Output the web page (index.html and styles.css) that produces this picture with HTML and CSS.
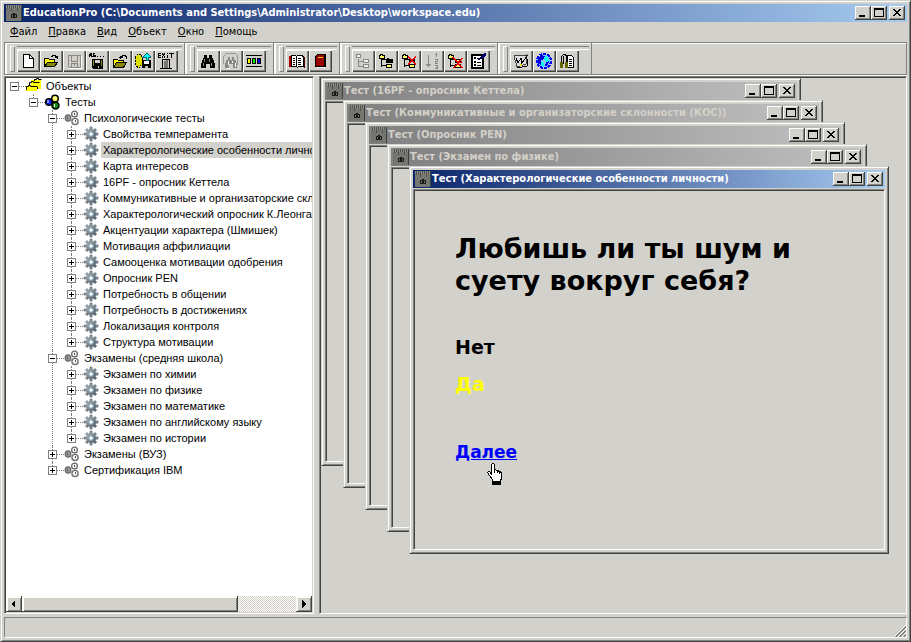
FILE: index.html
```html
<!DOCTYPE html>
<html lang="ru">

<head>
    <meta charset="UTF-8">
    <meta name="viewport" content="width=device-width, initial-scale=1.0">
    <title>EducationPro</title>
    <link rel="stylesheet" href="styles.css">
</head>

<body>

    <!-- Shared icons -->
    <svg class="sprite" aria-hidden="true">
        <linearGradient id="metal" x1="0" y1="0" x2="1" y2="1">
            <stop offset="0" stop-color="#a9b4bb" />
            <stop offset="1" stop-color="#4c565d" />
        </linearGradient>
        <symbol id="i-app" viewBox="0 0 16 16">
            <rect width="16" height="16" fill="#74776f" />
            <path d="M0 0h16v3H0z" fill="#8b8e86" />
            <path d="M1.5 0v4M3.5 0v3M5.5 0v6M7.5 0v3M9.5 0v3M11.5 0v6M13.5 0v3" stroke="#50524c" />
            <path d="M15.5 0v16" stroke="#3c3e3a" />
            <path d="M5.500 9.500h2v3h-2zM8.500 9.500h2v3h-2z" fill="none" stroke="#111" />
            <path d="M7 8h2v1H7zM7 11h2v1H7z" fill="#111" />
        </symbol>
        <symbol id="i-gear" viewBox="0 0 16 16">
            <path d="M8 1v14M1 8h14M3 3l10 10M13 3L3 13" stroke="url(#metal)" stroke-width="3" />
            <path d="M7 .5h2v15H7zM.5 7h15v2H.5z" fill="#7b878f" />
            <circle cx="8" cy="8" r="5" fill="url(#metal)" />
            <circle cx="8" cy="8" r="3" fill="#7fa0b5" />
            <circle cx="8" cy="8" r="1.7" fill="#fff" />
        </symbol>
        <symbol id="i-group" viewBox="0 0 16 16">
            <g fill="#f4f4f4" stroke="#6a6a6a" stroke-width="1.3">
                <ellipse cx="4" cy="8" rx="2.8" ry="3.2" fill="#9a9a9a" />
                <circle cx="10.500" cy="4" r="2.900" />
                <circle cx="11" cy="11.500" r="3.100" />
            </g>
            <path d="M3 7h1v2H3zM10 3h1v2h-1zM11 10h1v2h-1z" fill="#555" />
        </symbol>
        <symbol id="i-min" viewBox="0 0 12 10"><path d="M2 7h6v2H2z" /></symbol>
        <symbol id="i-max" viewBox="0 0 12 10"><path d="M1 0h10v9H1zM2 2v6h8V2z" fill-rule="evenodd" /></symbol>
        <symbol id="i-close" viewBox="0 0 12 10">
            <path d="M2 1h2v1h1v1h2V2h1V1h2v1H9v1H8v1H7v1h1v1h1v1h1v1H8V7H7V6H5v1H4v1H2V7h1V6h1V5h1V4H4V3H3V2H2z" />
        </symbol>
        <symbol id="i-tree" viewBox="0 0 16 16">
            <path d="M3.500 6v8M3 6.500h5M3 12.500h5" stroke="#000" fill="none" />
            <path d="M1.500 2.500h1v-1h2v1h2v3h-5z" fill="#ff6" stroke="#000" />
        </symbol>
    </svg>

    <div class="frame main-window">
        <header class="title-bar">
            <svg class="icon"><use href="#i-app" /></svg>
            <h1 class="title">EducationPro (C:\Documents and Settings\Administrator\Desktop\workspace.edu)</h1>
            <button class="cap" aria-label="Свернуть"><svg><use href="#i-min" /></svg></button>
            <button class="cap" aria-label="Развернуть"><svg><use href="#i-max" /></svg></button>
            <button class="cap close" aria-label="Закрыть"><svg><use href="#i-close" /></svg></button>
        </header>

        <nav class="menu">
            <button><u>Ф</u>айл</button>
            <button><u>П</u>равка</button>
            <button><u>В</u>ид</button>
            <button><u>О</u>бъект</button>
            <button><u>О</u>кно</button>
            <button><u>П</u>омощь</button>
        </nav>

        <div class="toolbar">
            <div class="band first">
                <!-- new -->
                <button aria-label="Новый"><svg viewBox="0 0 16 16"><path d="M3.500 1.500h6l4 4v9h-10z" fill="#fff" stroke="#000" /><path d="M9.500 2v3.500h4" fill="none" stroke="#000" /></svg></button>
                <!-- open -->
                <button aria-label="Открыть"><svg viewBox="0 0 16 16"><path d="M1.500 13.500v-8h4l1 1h5v3" fill="#ff0" stroke="#000" /><path d="M1.500 13.500l3-4h10l-3 4z" fill="#880" stroke="#000" /><path d="M8 3.500h1v-1h3v1h2v2M12 4.500h3" fill="none" stroke="#000" /></svg></button>
                <!-- save -->
                <button aria-label="Сохранить"><svg viewBox="0 0 16 16"><path d="M2.500 2.500h12v12h-11l-1-1z" fill="#d4d0c8" stroke="#888" /><path d="M5.500 3v5h6V3M5.500 14v-4h6v4M8.500 11v2" fill="none" stroke="#888" /><path d="M3 15.500h12.500V3" fill="none" stroke="#fff" /></svg></button>
                <!-- save as -->
                <button aria-label="Сохранить как"><svg viewBox="0 0 16 16"><path d="M3 6h11v10H4l-1-1z" /><path d="M4 7h1v6H4zM12 7h1v6h-1z" fill="#880" /><path d="M6 7h5v3H6zM9 13h1v2H9z" fill="#d4d0c8" /><path d="M0 4V1h1V0h1v4M0 2.500h2M6 .500H4v1.500h2v1.500H3M8 3.500h1M11 3.500h1M14 3.500h1" stroke="#000" fill="none" /></svg></button>
                <!-- close project -->
                <button aria-label="Закрыть"><svg viewBox="0 0 16 16"><path d="M1.500 14.500v-8h4l1 1h5v3" fill="#ff0" stroke="#000" /><path d="M1.500 14.500l3-5h10l-3 5z" fill="#880" stroke="#000" /><path d="M7 4.500h4M8.500 3v3M9 3.500h1v-1h3v1h1v2" fill="none" stroke="#000" /></svg></button>
                <!-- export -->
                <button aria-label="Экспорт"><svg viewBox="0 0 16 16"><path d="M0 5l3-4h3l1 3v9l-2-1-1 3-3-2z" fill="#dd0" stroke="#000" stroke-dasharray="2 1" /><path d="M7 7h9v8H7z" /><path d="M9 8h5v3H9z" fill="#fff" /><path d="M10 13h3v2h-3z" fill="#bbb" /><path d="M12 0l4 4h-3v3h-2V4H8z" fill="#0ff" stroke="#066" /></svg></button>
                <!-- exit -->
                <button aria-label="Выход"><svg viewBox="0 0 16 16"><path d="M3 .500H.500v4H3M1 2.500h2M4 0l3 5M7 0L4 5M9.500 2v3M9.500 0v1M11 .500h5M13.500 0v5" fill="none" stroke="#000" /><path d="M4.500 15V6.500h7V15" fill="#d4d0c8" stroke="#000" /><path d="M6 8l4-1v9l-4-1z" fill="#777" /><path d="M2 15.500h12" stroke="#000" /></svg></button>
            </div>
            <div class="band">
                <!-- find -->
                <button aria-label="Найти"><svg viewBox="0 0 16 16"><path d="M4 2h3v3h2V2h3v3h1v2h1v3h1v5h-5v-4H6v4H1v-5h1V7h1V5h1z" /><path d="M4.500 6v3M3.500 10v3M9.500 6v3M11.500 10v3" stroke="#888" /></svg></button>
                <!-- find again -->
                <button aria-label="Найти далее"><svg viewBox="0 0 16 16"><path d="M2.500 .500h10l2 2v9h-2M.500 11V4l2-3" fill="none" stroke="#999" /><path d="M5 4h2v3h2V4h2v3h2v3h1v5h-4v-4H6v4H2v-5h1V7h2z" fill="#888" /><path d="M5.500 8v4M9.500 8v2M12.500 10v4M4 15.500h3" stroke="#fff" /></svg></button>
                <!-- colours -->
                <button aria-label="Цвета"><svg viewBox="0 0 16 16"><path d="M0 2.500h16M0 13.500h16" stroke="#000" /><path d="M1.500 5.500h3v5h-3z" fill="#ff0" stroke="#000" /><path d="M6.500 5.500h3v5h-3z" fill="#0e0" stroke="#000" /><path d="M11.500 5.500h3v5h-3z" fill="#00f" stroke="#000" /></svg></button>
            </div>
            <div class="band">
                <!-- open book -->
                <button aria-label="Справочник"><svg viewBox="0 0 16 16"><path d="M1 3h14v11H1z" fill="#fff" /><path d="M1 3v11" stroke="#a00" stroke-width="2" /><path d="M2.500 2.500h4l1 1 1-1h4l2 1v10h-5l-1 1-1-1h-5zM7.500 3v11" fill="none" stroke="#000" /><path d="M4 5.500h2M4 7.500h2M4 9.500h2M4 11.500h2M9 5.500h3M9 7.500h3M9 9.500h3M9 11.500h3" stroke="#000" /><path d="M15.500 4v11" stroke="#500" /></svg></button>
                <!-- closed book -->
                <button aria-label="Книга"><svg viewBox="0 0 16 16"><path d="M3 3l2-2h9v13H3z" /><path d="M4 4h8v9H4z" fill="#900" /><path d="M5 2h7v2H5z" fill="#900" /><path d="M6 4h5v1H6z" fill="#fc0" /><path d="M5 14.500h8" stroke="#fff" stroke-dasharray="2 1" /></svg></button>
            </div>
            <div class="band">
                <!-- tree, disabled -->
                <button aria-label="Объекты"><svg viewBox="0 0 16 16"><path d="M3.500 6v7.500H8M3.500 8.500H8" fill="none" stroke="#888" /><path d="M1.500 1.500h4v3h-4zM8.500 6.500h5v3h-5zM8.500 11.500h5v3h-5z" fill="#eee" stroke="#888" /></svg></button>
                <!-- add node -->
                <button aria-label="Добавить"><svg viewBox="0 0 16 16"><use href="#i-tree" /><path d="M8 6h1V5h2v1h4v4H8z" /><path d="M8.500 11.500h5v3h-5z" fill="#ff6" stroke="#000" /></svg></button>
                <!-- delete node -->
                <button aria-label="Удалить"><svg viewBox="0 0 16 16"><use href="#i-tree" /><path d="M8.500 11.500h5v3h-5z" fill="#ff6" stroke="#000" /><path d="M8 6h6v3H8z" /><path d="M7 4l8 7M15 4l-8 7" stroke="#e00" stroke-width="1.500" /></svg></button>
                <!-- sort, disabled -->
                <button aria-label="Порядок"><svg viewBox="0 0 16 16"><path d="M4.500 2v12M2 11.500h5M3 12.500h3M12.500 0v4M11 1.500h1M11 6.500h2.500v2H11.500v2H14M11 12.500h2.500v3H11M12 14h1" fill="none" stroke="#888" /></svg></button>
                <!-- clear all -->
                <button aria-label="Очистить"><svg viewBox="0 0 16 16"><use href="#i-tree" /><path d="M8.500 6.500h5v3h-5zM8.500 11.500h5v3h-5z" fill="#ff6" stroke="#000" /><path d="M7 5l8 10M15 5l-8 10M6 4l4 5M15 9l-5 1" stroke="#e00" stroke-width="1.500" /></svg></button>
                <!-- checklist -->
                <button aria-label="Свойства"><svg viewBox="0 0 16 16"><path d="M2 2h11v13H2z" fill="#fff" stroke="#000" stroke-width="2" /><path d="M4 5h2M4 9h2M4 12h2" stroke="#000" stroke-width="2" /><path d="M7 5.500h2M7 9.500h4M7 12.500h4" stroke="#000" /><path d="M8 7l4-4 3-3v3l-3 2z" fill="#006" stroke="#006" /></svg></button>
            </div>
            <div class="band last">
                <!-- test sheet -->
                <button aria-label="Тест"><svg viewBox="0 0 16 16"><path d="M1 3l3 11 9-3V2z" fill="#ddd" stroke="#444" /><path d="M3 5l2 5 3-5 1 5M15 2l-7 9M14 6v7l-10 2" stroke="#000" fill="none" /><path d="M7 11h2v2H7z" fill="#dd0" /></svg></button>
                <!-- globe -->
                <button aria-label="Интернет"><svg viewBox="0 0 16 16"><circle cx="8" cy="8" r="7" fill="#8cf" stroke="#00f" stroke-width="2" stroke-dasharray="3 1" /><path d="M2 5l3-3 4 1-1 3-3 1 1 3-2 2-2-3zM10 9l3-1-1 4-3 1z" fill="#00d" /><path d="M9 3l3 1v3h2v1l-4 1-2-2zM5 9l3 1v3l-2 1z" fill="#0ff" /></svg></button>
                <!-- book search -->
                <button aria-label="Просмотр"><svg viewBox="0 0 16 16"><path d="M8.500 2.500h4l2 2v10h-6z" fill="#fff" stroke="#000" /><path d="M10 6.500h3M10 8.500h3M10 10.500h3M10 12.500h3" stroke="#000" /><path d="M2.500 11V3.500l2-2h2l1 2V11M4.500 3v8" fill="none" stroke="#000" /><path d="M1 9h3v6H1zM6 9h3v6H6z" fill="#660" /></svg></button>
            </div>
        </div>

        <main class="panes">
            <section class="sunken side">
                <div class="tree-view">
                    <ul class="tree">
                        <li>
                            <div class="row"><button class="toggle open" aria-label="Свернуть"></button><i></i>
                                <svg class="icon" viewBox="0 0 16 16"><path d="M5 2h3V1h3v1h4v9h-4v2H0V8h2V7h3z" fill="#ff0" /><path d="M.500 12V8.500h2v-1h2v1h7M3.500 7V4.500h2v-1h2v1h6M8.500 3V1.500h2v-1h2v1h3M11.500 9v2" fill="none" stroke="#000" /></svg>
                                <span>Объекты</span></div>
                            <ul>
                                <li>
                                    <div class="row"><button class="toggle open" aria-label="Свернуть"></button><i></i>
                                        <svg class="icon" viewBox="0 0 16 16"><g stroke="#000" stroke-width="1.500"><circle cx="4" cy="8" r="3.300" fill="#12f" /><circle cx="10" cy="4.500" r="3.300" fill="#ff6" /><circle cx="10.500" cy="11.500" r="3.500" fill="#181" /></g><path d="M3 6v3M9 4h2M9.500 10v3" stroke="#fff" /></svg>
                                        <span>Тесты</span></div>
                                    <ul>
                                        <li>
                                            <div class="row"><button class="toggle open" aria-label="Свернуть"></button><i></i><svg class="icon"><use href="#i-group" /></svg><span>Психологические тесты</span></div>
                                            <ul>
                                                <li><div class="row"><button class="toggle" aria-label="Развернуть"></button><i></i><svg class="icon"><use href="#i-gear" /></svg><span>Свойства темперамента</span></div></li>
                                                <li><div class="row"><button class="toggle" aria-label="Развернуть"></button><i></i><svg class="icon"><use href="#i-gear" /></svg><span class="selected">Характерологические особенности личности</span></div></li>
                                                <li><div class="row"><button class="toggle" aria-label="Развернуть"></button><i></i><svg class="icon"><use href="#i-gear" /></svg><span>Карта интересов</span></div></li>
                                                <li><div class="row"><button class="toggle" aria-label="Развернуть"></button><i></i><svg class="icon"><use href="#i-gear" /></svg><span>16PF - опросник Кеттела</span></div></li>
                                                <li><div class="row"><button class="toggle" aria-label="Развернуть"></button><i></i><svg class="icon"><use href="#i-gear" /></svg><span>Коммуникативные и организаторские склонности</span></div></li>
                                                <li><div class="row"><button class="toggle" aria-label="Развернуть"></button><i></i><svg class="icon"><use href="#i-gear" /></svg><span>Характерологический опросник К.Леонгарда</span></div></li>
                                                <li><div class="row"><button class="toggle" aria-label="Развернуть"></button><i></i><svg class="icon"><use href="#i-gear" /></svg><span>Акцентуации характера (Шмишек)</span></div></li>
                                                <li><div class="row"><button class="toggle" aria-label="Развернуть"></button><i></i><svg class="icon"><use href="#i-gear" /></svg><span>Мотивация аффилиации</span></div></li>
                                                <li><div class="row"><button class="toggle" aria-label="Развернуть"></button><i></i><svg class="icon"><use href="#i-gear" /></svg><span>Самооценка мотивации одобрения</span></div></li>
                                                <li><div class="row"><button class="toggle" aria-label="Развернуть"></button><i></i><svg class="icon"><use href="#i-gear" /></svg><span>Опросник PEN</span></div></li>
                                                <li><div class="row"><button class="toggle" aria-label="Развернуть"></button><i></i><svg class="icon"><use href="#i-gear" /></svg><span>Потребность в общении</span></div></li>
                                                <li><div class="row"><button class="toggle" aria-label="Развернуть"></button><i></i><svg class="icon"><use href="#i-gear" /></svg><span>Потребность в достижениях</span></div></li>
                                                <li><div class="row"><button class="toggle" aria-label="Развернуть"></button><i></i><svg class="icon"><use href="#i-gear" /></svg><span>Локализация контроля</span></div></li>
                                                <li><div class="row"><button class="toggle" aria-label="Развернуть"></button><i></i><svg class="icon"><use href="#i-gear" /></svg><span>Структура мотивации</span></div></li>
                                            </ul>
                                        </li>
                                        <li>
                                            <div class="row"><button class="toggle open" aria-label="Свернуть"></button><i></i><svg class="icon"><use href="#i-group" /></svg><span>Экзамены (средняя школа)</span></div>
                                            <ul>
                                                <li><div class="row"><button class="toggle" aria-label="Развернуть"></button><i></i><svg class="icon"><use href="#i-gear" /></svg><span>Экзамен по химии</span></div></li>
                                                <li><div class="row"><button class="toggle" aria-label="Развернуть"></button><i></i><svg class="icon"><use href="#i-gear" /></svg><span>Экзамен по физике</span></div></li>
                                                <li><div class="row"><button class="toggle" aria-label="Развернуть"></button><i></i><svg class="icon"><use href="#i-gear" /></svg><span>Экзамен по математике</span></div></li>
                                                <li><div class="row"><button class="toggle" aria-label="Развернуть"></button><i></i><svg class="icon"><use href="#i-gear" /></svg><span>Экзамен по английскому языку</span></div></li>
                                                <li><div class="row"><button class="toggle" aria-label="Развернуть"></button><i></i><svg class="icon"><use href="#i-gear" /></svg><span>Экзамен по истории</span></div></li>
                                            </ul>
                                        </li>
                                        <li><div class="row"><button class="toggle" aria-label="Развернуть"></button><i></i><svg class="icon"><use href="#i-group" /></svg><span>Экзамены (ВУЗ)</span></div></li>
                                        <li><div class="row"><button class="toggle" aria-label="Развернуть"></button><i></i><svg class="icon"><use href="#i-group" /></svg><span>Сертификация IBM</span></div></li>
                                    </ul>
                                </li>
                            </ul>
                        </li>
                    </ul>
                </div>
                <div class="scrollbar">
                    <button aria-label="Влево"><svg viewBox="0 0 12 12"><path d="M3 6l4-4v8z" /></svg></button>
                    <div class="track"><div class="thumb"></div></div>
                    <button aria-label="Вправо"><svg viewBox="0 0 12 12"><path d="M8 6L4 2v8z" /></svg></button>
                </div>
            </section>

            <section class="sunken desktop">
                <div class="frame child w1">
                    <div class="title-bar inactive">
                        <svg class="icon"><use href="#i-app" /></svg>
                        <h2 class="title">Тест (16PF - опросник Кеттела)</h2>
                        <button class="cap" aria-label="Свернуть"><svg><use href="#i-min" /></svg></button>
                        <button class="cap" aria-label="Развернуть"><svg><use href="#i-max" /></svg></button>
                        <button class="cap close" aria-label="Закрыть"><svg><use href="#i-close" /></svg></button>
                    </div>
                    <div class="sunken body"></div>
                </div>
                <div class="frame child w2">
                    <div class="title-bar inactive">
                        <svg class="icon"><use href="#i-app" /></svg>
                        <h2 class="title">Тест (Коммуникативные и организаторские склонности (КОС))</h2>
                        <button class="cap" aria-label="Свернуть"><svg><use href="#i-min" /></svg></button>
                        <button class="cap" aria-label="Развернуть"><svg><use href="#i-max" /></svg></button>
                        <button class="cap close" aria-label="Закрыть"><svg><use href="#i-close" /></svg></button>
                    </div>
                    <div class="sunken body"></div>
                </div>
                <div class="frame child w3">
                    <div class="title-bar inactive">
                        <svg class="icon"><use href="#i-app" /></svg>
                        <h2 class="title">Тест (Опросник PEN)</h2>
                        <button class="cap" aria-label="Свернуть"><svg><use href="#i-min" /></svg></button>
                        <button class="cap" aria-label="Развернуть"><svg><use href="#i-max" /></svg></button>
                        <button class="cap close" aria-label="Закрыть"><svg><use href="#i-close" /></svg></button>
                    </div>
                    <div class="sunken body"></div>
                </div>
                <div class="frame child w4">
                    <div class="title-bar inactive">
                        <svg class="icon"><use href="#i-app" /></svg>
                        <h2 class="title">Тест (Экзамен по физике)</h2>
                        <button class="cap" aria-label="Свернуть"><svg><use href="#i-min" /></svg></button>
                        <button class="cap" aria-label="Развернуть"><svg><use href="#i-max" /></svg></button>
                        <button class="cap close" aria-label="Закрыть"><svg><use href="#i-close" /></svg></button>
                    </div>
                    <div class="sunken body"></div>
                </div>
                <div class="frame child w5">
                    <div class="title-bar">
                        <svg class="icon"><use href="#i-app" /></svg>
                        <h2 class="title">Тест (Характерологические особенности личности)</h2>
                        <button class="cap" aria-label="Свернуть"><svg><use href="#i-min" /></svg></button>
                        <button class="cap" aria-label="Развернуть"><svg><use href="#i-max" /></svg></button>
                        <button class="cap close" aria-label="Закрыть"><svg><use href="#i-close" /></svg></button>
                    </div>
                    <div class="sunken body quiz">
                        <h3 class="question">Любишь ли ты шум и суету вокруг себя?</h3>
                        <button class="answer">Нет</button>
                        <button class="answer hot">Да</button>
                        <div class="next">
                            <a href="#">Далее</a>
                            <svg class="pointer" viewBox="0 0 17 24"><path d="M5.500 12.500V2.500l1-1h1l1 1v5l3 1 2 1 2 1v6l-1 2v1h-8v-2l-3-4-2-3 1-1h1l1 1z" fill="#fff" stroke="#000" /><path d="M8.500 7v4M11.500 8v3M13.500 9v3" stroke="#000" /><path d="M6 19h9v4H6z" /></svg>
                        </div>
                    </div>
                </div>
            </section>
        </main>

        <footer class="status">
            <svg class="grip" viewBox="0 0 12 12"><path d="M0 12L12 0M4 12l8-8M8 12l4-4" stroke="#fff" /><path d="M1.500 12L12 1.500M5.500 12L12 5.500M9.500 12L12 9.500" stroke="#808080" stroke-width="2" /></svg>
        </footer>
    </div>

</body>

</html>
```
FILE: styles.css
```css
:root {
    --face: #d2d1cc;
    --light: #fcfcf8;
    --shadow: #828280;
    --dark: #424440;
}

* {
    margin: 0;
    padding: 0;
    box-sizing: border-box;
}

body {
    height: 100vh;
    font-family: "DejaVu Sans Condensed", Tahoma, sans-serif;
    font-size: 11px;
    color: #000;
    background-color: var(--face);
    cursor: default;
}

button {
    font: inherit;
    color: inherit;
    background-color: var(--face);
    border: none;
}

svg {
    display: block;
    flex: none;
    shape-rendering: crispEdges;
}

ul {
    list-style: none;
}

.sprite {
    position: absolute;
    width: 0;
    height: 0;
}

.icon {
    width: 16px;
    height: 16px;
    shape-rendering: auto;
}

/* raised window border */
.frame {
    display: flex;
    flex-direction: column;
    background-color: var(--face);
    border: 1px solid;
    border-color: var(--face) var(--dark) var(--dark) var(--face);
    box-shadow: inset 1px 1px var(--light), inset -1px -1px var(--shadow);
    padding: 3px;
}

.sunken {
    border: 1px solid;
    border-color: var(--shadow) var(--light) var(--light) var(--shadow);
    box-shadow: inset 1px 1px var(--dark), inset -1px -1px var(--face);
    padding: 1px;
}

.main-window {
    height: 100%;
}

/* title bars */
.title-bar {
    display: flex;
    align-items: center;
    height: 18px;
    flex: none;
    padding: 0 2px;
    color: #fff;
    background: linear-gradient(to right, #0a246a, #a6caf0);
}

.inactive {
    color: #d4d0c8;
    background: linear-gradient(to right, #808080, #c0c0c0);
}

.title {
    flex: 1;
    min-width: 0;
    padding-left: 1px;
    overflow: hidden;
    white-space: nowrap;
    font-size: 11px;
    line-height: 18px;
}

.cap {
    width: 16px;
    height: 14px;
    padding: 1px 2px 3px 1px;
    box-shadow: inset -1px -1px var(--dark), inset 1px 1px var(--light), inset -2px -2px var(--shadow);
}

.cap svg {
    width: 12px;
    height: 10px;
    margin: 1px;
}

.close {
    margin-left: 2px;
}

/* menu */
.menu {
    display: flex;
    height: 20px;
    flex: none;
    padding-left: 1px;
}

.menu button {
    padding: 0 6px 0 5px;
    line-height: 20px;
}

/* toolbar */
.toolbar {
    display: flex;
    height: 33px;
    flex: none;
    margin-bottom: 1px;
    border: 1px solid var(--shadow);
    box-shadow: inset 1px 1px var(--light), 0 1px var(--light);
}

.band {
    position: relative;
    display: flex;
    align-items: flex-end;
    padding: 0 7px 2px 12px;
    border-right: 1px solid var(--shadow);
    box-shadow: inset 2px 0 var(--light);
}

.band.first {
    padding-right: 6px;
}

.band.last {
    padding-right: 12px;
}

/* gripper and upper ridge */
.band::before {
    content: "";
    position: absolute;
    left: 5px;
    top: 3px;
    bottom: 2px;
    width: 3px;
    border: 1px solid;
    border-color: var(--light) var(--shadow) var(--shadow) var(--light);
}

.band::after {
    content: "";
    position: absolute;
    left: 12px;
    right: 2px;
    top: 3px;
    height: 2px;
    border-top: 1px solid var(--shadow);
    border-bottom: 1px solid var(--light);
}

.band button {
    width: 23px;
    height: 22px;
    padding: 3px;
    box-shadow: inset 1px 1px var(--light), inset -1px -1px var(--dark), inset -2px -2px var(--shadow);
}

.band svg {
    width: 16px;
    height: 16px;
}

/* panes */
.panes {
    display: flex;
    flex: 1;
    min-height: 0;
    gap: 5px;
}

.side {
    display: flex;
    flex-direction: column;
    width: 310px;
    flex: none;
    padding: 1px;
}

.tree-view {
    flex: 1;
    min-height: 0;
    overflow: hidden;
    background-color: #fff;
    font-family: "Liberation Sans", Arial, sans-serif;
}

.tree {
    padding-left: 4px;
}

.tree ul {
    padding-left: 19px;
}

.tree li {
    position: relative;
}

/* dotted line joining siblings */
.tree ul > li::before {
    content: "";
    position: absolute;
    left: 4px;
    top: 0;
    bottom: 0;
    border-left: 1px dotted #808080;
}

.tree ul > li:last-child::before {
    bottom: auto;
    height: 8px;
}

.row {
    position: relative;
    display: flex;
    align-items: center;
    height: 16px;
}

.row i {
    width: 7px;
    flex: none;
    border-top: 1px dotted #808080;
}

.row span {
    margin-left: 2px;
    padding: 0 2px;
    line-height: 16px;
    white-space: nowrap;
}

.row .selected {
    background-color: var(--face);
}

.toggle {
    width: 9px;
    height: 9px;
    flex: none;
    border: 1px solid #808080;
    background: linear-gradient(#000, #000) center / 5px 1px no-repeat,
        linear-gradient(#000, #000) center / 1px 5px no-repeat, #fff;
}

.toggle.open {
    background: linear-gradient(#000, #000) center / 5px 1px no-repeat, #fff;
}

.scrollbar {
    display: flex;
    height: 16px;
    flex: none;
}

.scrollbar button,
.thumb {
    background-color: var(--face);
    box-shadow: inset -1px -1px var(--dark), inset 2px 2px var(--light), inset -2px -2px var(--shadow);
}

.scrollbar button {
    width: 16px;
    padding: 2px;
}

.scrollbar svg {
    width: 12px;
    height: 12px;
}

.track {
    flex: 1;
    background: repeating-conic-gradient(#fff 0 25%, #d4d0c8 0 50%) 0 0 / 2px 2px;
}

.thumb {
    width: 79%;
    height: 100%;
}

.desktop {
    position: relative;
    flex: 1;
    min-width: 0;
    overflow: hidden;
}

/* cascaded windows */
.child {
    position: absolute;
    width: 480px;
    height: 388px;
}

.w1 { left: 1px; top: 1px; }
.w2 { left: 23px; top: 23px; }
.w3 { left: 45px; top: 45px; }
.w4 { left: 67px; top: 67px; }
.w5 { left: 89px; top: 89px; }

.body {
    flex: 1;
    margin-top: 1px;
}

/* question */
.quiz {
    display: flex;
    flex-direction: column;
    align-items: flex-start;
    padding: 43px 80px 0 41px;
    font-family: "DejaVu Sans", Verdana, sans-serif;
    font-weight: bold;
    font-size: 19px;
    line-height: 24px;
}

.question {
    margin-bottom: 38px;
    font-size: 27px;
    line-height: 32px;
}

.answer {
    margin-bottom: 13px;
}

.hot {
    margin-bottom: 44px;
    color: #ff0;
}

.next {
    position: relative;
    font-size: 17px;
}

.next a {
    color: #00f;
}

.pointer {
    position: absolute;
    left: 31px;
    top: 22px;
    width: 17px;
    height: 24px;
}

/* status bar */
.status {
    display: flex;
    justify-content: flex-end;
    align-items: flex-end;
    height: 21px;
    flex: none;
    margin-top: 3px;
    border: 1px solid;
    border-color: var(--shadow) var(--light) var(--light) var(--shadow);
}

.grip {
    width: 12px;
    height: 12px;
}
```
